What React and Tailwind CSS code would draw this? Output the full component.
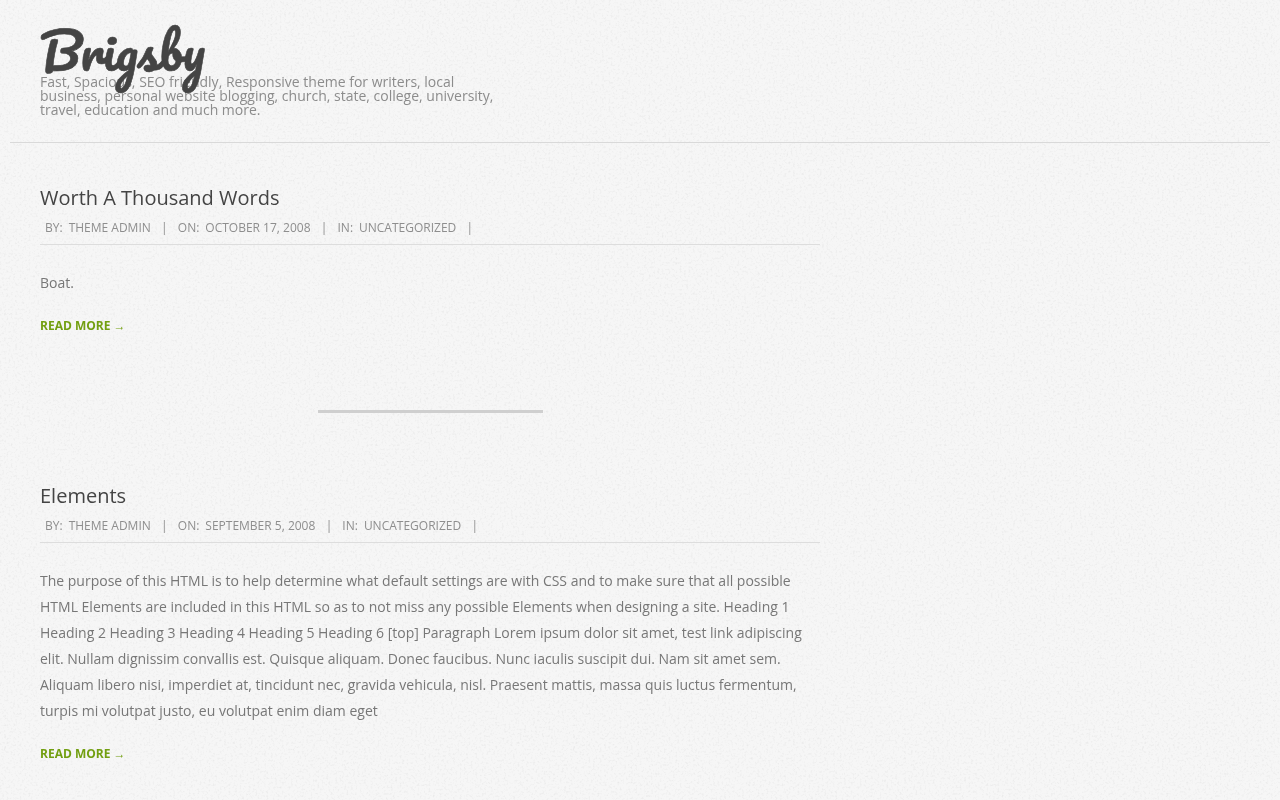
const posts = [
  {
    title: 'Worth A Thousand Words',
    author: 'Theme Admin',
    date: 'October 17, 2008',
    category: 'Uncategorized',
    excerpt: 'Boat.',
  },
  {
    title: 'Elements',
    author: 'Theme Admin',
    date: 'September 5, 2008',
    category: 'Uncategorized',
    excerpt:
      'The purpose of this HTML is to help determine what default settings are with CSS and to make sure that all possible HTML Elements are included in this HTML so as to not miss any possible Elements when designing a site. Heading 1 Heading 2 Heading 3 Heading 4 Heading 5 Heading 6 [top] Paragraph Lorem ipsum dolor sit amet, test link adipiscing elit. Nullam dignissim convallis est. Quisque aliquam. Donec faucibus. Nunc iaculis suscipit dui. Nam sit amet sem. Aliquam libero nisi, imperdiet at, tincidunt nec, gravida vehicula, nisl. Praesent mattis, massa quis luctus fermentum, turpis mi volutpat justo, eu volutpat enim diam eget',
  },
];

// Faint paper grain behind the page
function PaperTexture() {
  return (
    <svg className="absolute inset-0 -z-10 h-full w-full" aria-hidden="true">
      <filter id="grain" x="0" y="0" width="100%" height="100%" colorInterpolationFilters="sRGB">
        <feTurbulence type="fractalNoise" baseFrequency="0.45" numOctaves="2" seed="4" stitchTiles="stitch" />
        <feColorMatrix values="0 0 0 0 0  0 0 0 0 0  0 0 0 0 0  0.12 0 0 0 -0.06" />
      </filter>
      <rect width="100%" height="100%" filter="url(#grain)" />
    </svg>
  );
}

function MetaItem({ label, value }) {
  return (
    <li className="flex">
      <span>{label}:</span>
      <a href="#" className="ml-1.5">{value}</a>
      <span className="mr-[10.1px] ml-[10.3px]">|</span>
    </li>
  );
}

function Post({ post }) {
  return (
    <article>
      <h2 className="text-[20px] leading-[26px] text-[#444]">
        <a href="#">{post.title}</a>
      </h2>
      <ul className="mt-[7px] flex h-[27px] border-b border-[#ddd] pl-[5px] text-[12px] leading-[20px] text-[#8e8e8e] uppercase">
        <MetaItem label="By" value={post.author} />
        <MetaItem label="On" value={post.date} />
        <MetaItem label="In" value={post.category} />
      </ul>
      <p className="mt-[25px] text-[14px] leading-[26px] text-[#777]">{post.excerpt}</p>
      <a href="#" className="mt-[20px] block text-[12px] leading-[20px] font-bold text-[#729f11] uppercase">
        Read More →
      </a>
    </article>
  );
}

export default function App() {
  return (
    <div className="relative isolate h-screen overflow-hidden bg-[#f6f6f6] font-['Open_Sans',sans-serif]">
      <PaperTexture />

      <div className="will-change-transform">
        <header className="mx-[10px] h-[143px] border-b border-[#d9d9d9] px-[30px] pt-[20px]">
          <h1 className="relative z-10 h-[55px] w-[165px] text-[50px] leading-[60px] font-normal whitespace-nowrap text-[#444] font-['Pacifico','Lato',cursive] [-webkit-text-stroke:0.6px_#444]">
            <a href="#">Brigsby</a>
          </h1>
          <p className="w-[460px] text-[14px] leading-[14px] text-[#8c8c8c]">
            Fast, Spacious, SEO friendly, Responsive theme for writers, local business, personal website blogging,
            church, state, college, university, travel, education and much more.
          </p>
        </header>

        <main className="ml-[40px] w-[780px] pt-[42px]">
          <Post post={posts[0]} />
          <hr className="mt-[74px] mb-[70px] ml-[278px] h-[3px] w-[225px] border-0 bg-[#cfcfcf]" />
          <Post post={posts[1]} />
        </main>
      </div>
    </div>
  );
}
